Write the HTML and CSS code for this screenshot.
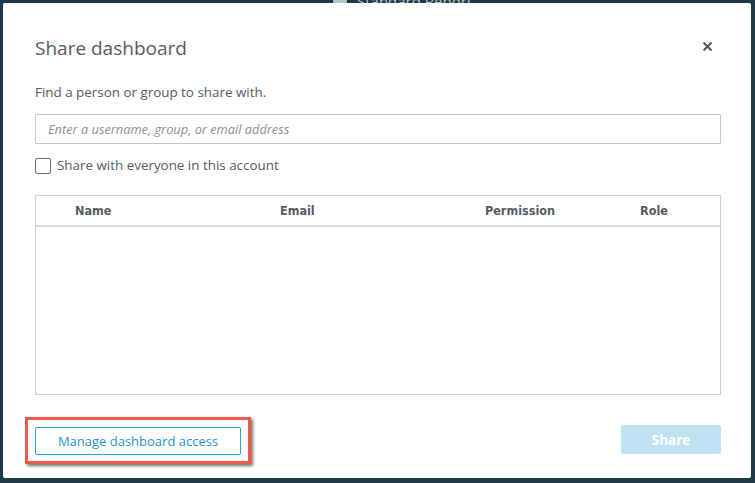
FILE: index.html
```html
<!DOCTYPE html>
<html>
<head>
<meta charset="utf-8">
<link rel="stylesheet" href="styles.css">
</head>
<body>
<div class="backdrop">
  <div class="bg-title"><span class="bg-icon"></span>Standard Report</div>
  <div class="bg-num bg-num1">75.18%</div>
  <div class="bg-num bg-num2">18</div>
  <div class="dialog">
    <div class="head">
      <h1 class="title">Share dashboard</h1>
      <button class="close" aria-label="Close">
        <svg width="11" height="11" viewBox="0 0 11 11"><path d="M1.5 1.5 L9.5 9.5 M9.5 1.5 L1.5 9.5" stroke="#555" stroke-width="2"/></svg>
      </button>
    </div>
    <p class="hint">Find a person or group to share with.</p>
    <input class="search" type="text" placeholder="Enter a username, group, or email address">
    <label class="check"><span class="box"></span>Share with everyone in this account</label>
    <div class="table">
      <div class="thead">
        <span class="c-name">Name</span>
        <span class="c-email">Email</span>
        <span class="c-perm">Permission</span>
        <span class="c-role">Role</span>
      </div>
    </div>
    <div class="foot">
      <div class="highlight"><button class="manage">Manage dashboard access</button></div>
      <button class="share">Share</button>
    </div>
  </div>
</div>
</body>
</html>
```

FILE: styles.css
```css
html, body {
  margin: 0;
  padding: 0;
}
body {
  width: 755px;
  height: 483px;
  overflow: hidden;
  font-family: "Open Sans", "DejaVu Sans", sans-serif;
  color: #545b64;
}
.backdrop {
  position: relative;
  width: 755px;
  height: 483px;
  background: #1f3a46;
  padding: 3px 4px 5px 3px;
  box-sizing: border-box;
  overflow: hidden;
}
.bg-title {
  position: absolute;
  left: 333px;
  top: -9px;
  color: #b9c3c8;
  font-size: 15px;
  display: flex;
  align-items: center;
  gap: 10px;
}
.bg-icon {
  width: 14px;
  height: 10px;
  background: #b9c3c8;
}
.bg-num {
  position: absolute;
  color: #8d9aa1;
  font-size: 30px;
  top: 474px;
}
.bg-num1 { left: 150px; }
.bg-num2 { left: 492px; }
.dialog {
  position: relative;
  height: 100%;
  background: #fff;
  border-radius: 2px;
  box-sizing: border-box;
  padding: 0 30px 0 32px;
  display: flex;
  flex-direction: column;
}
.head {
  display: flex;
  justify-content: space-between;
  height: 88px;
  box-sizing: border-box;
}
.title {
  margin: 0;
  font-weight: 400;
  font-size: 19px;
  color: #545b64;
  position: relative;
  top: -1px;
  align-self: flex-start;
  padding-top: 33px;
}
.close {
  border: 0;
  background: none;
  padding: 0;
  width: 11px;
  height: 11px;
  align-self: flex-start;
  margin-top: 38px;
  margin-right: 8px;
  display: flex;
}
.hint {
  margin: -8px 0 0;
  font-size: 13.4px;
  line-height: 18px;
  color: #545b64;
}
.search {
  margin-top: 13px;
  height: 30px;
  box-sizing: border-box;
  border: 1px solid #c6c6c6;
  border-radius: 1px;
  padding: 0 12px;
  font-family: inherit;
  font-size: 12.8px;
  outline: none;
}
.search::placeholder {
  color: #8a9096;
  font-style: italic;
}
.check {
  margin-top: 13px;
  display: flex;
  align-items: center;
  gap: 6px;
  font-size: 13.4px;
  line-height: 17px;
  color: #545b64;
}
.box {
  width: 14px;
  height: 14px;
  border: 1px solid #6b6f73;
  border-radius: 2px;
  box-sizing: content-box;
}
.table {
  margin-top: 21px;
  height: 200px;
  border: 1px solid #d0d0d0;
  box-sizing: border-box;
}
.thead {
  display: grid;
  grid-template-columns: 205px 205px 155px 1fr;
  height: 31px;
  align-items: center;
  border-bottom: 2px solid #dadada;
  box-sizing: border-box;
  padding-left: 39px;
  font-family: "DejaVu Sans", sans-serif;
  font-stretch: condensed;
  font-weight: bold;
  font-size: 12.5px;
  color: #555b61;
}
.foot {
  margin-top: auto;
  margin-bottom: 14px;
  display: flex;
  justify-content: space-between;
  align-items: center;
}
.highlight {
  margin-left: -10px;
  padding: 7px 7px 6px 7px;
  border: 3px solid #f0584a;
  box-shadow: 2px 2px 3px rgba(0,0,0,0.55);
}
.manage {
  display: block;
  width: 206px;
  height: 28px;
  border: 1px solid #2a9fd8;
  border-radius: 2px;
  background: #fff;
  color: #1f94d0;
  font-family: inherit;
  font-size: 13px;
  padding: 0;
}
.share {
  width: 100px;
  height: 29px;
  border: 0;
  border-radius: 2px;
  background: #bee2f4;
  color: #fff;
  font-family: inherit;
  font-weight: bold;
  font-size: 13.5px;
  padding: 0;
  margin-bottom: 2px;
}
```
